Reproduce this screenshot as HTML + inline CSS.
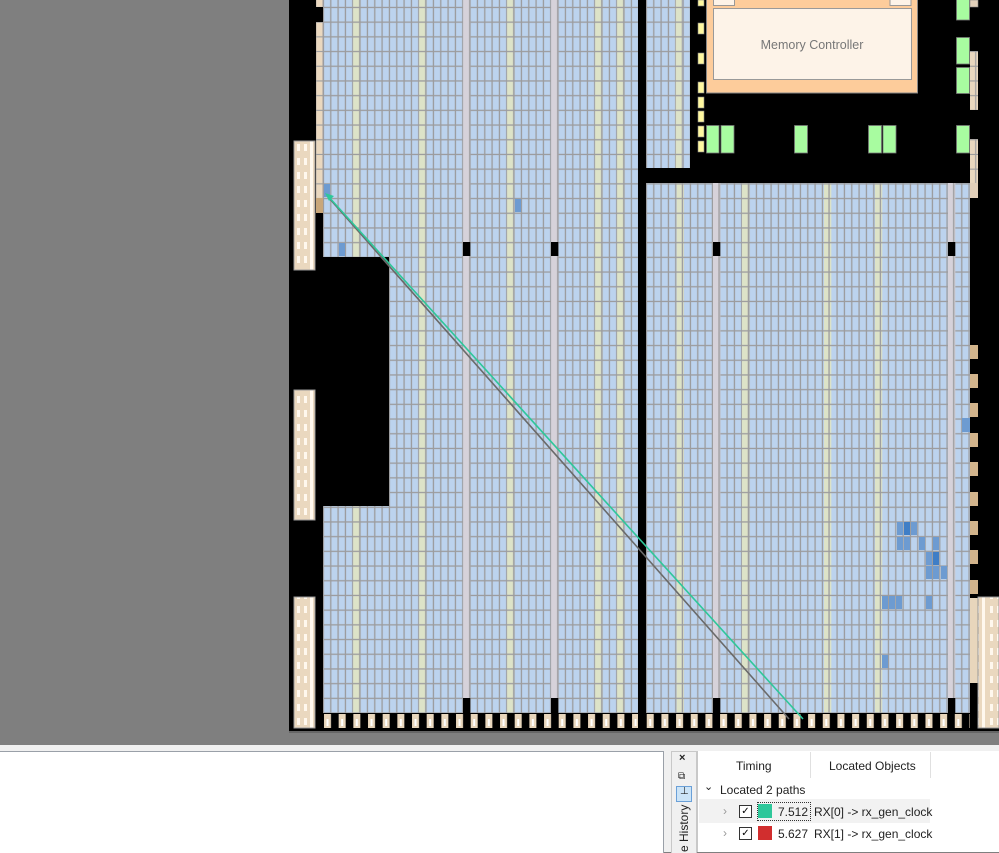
<!DOCTYPE html>
<html><head><meta charset="utf-8"><style>
html,body{margin:0;padding:0;width:999px;height:852px;overflow:hidden;background:#7f7f7f;font-family:"Liberation Sans",sans-serif}
svg{position:absolute;left:0;top:0}
.t{position:absolute;font-size:12px;color:#222;white-space:nowrap}
</style></head><body>
<svg width="999" height="745" viewBox="0 0 999 745">
<defs>
<pattern id="pl" patternUnits="userSpaceOnUse" x="323" y="7" width="7.333" height="14.7">
<rect width="7.4" height="14.8" fill="#9c9c9e"/><rect x="1.1" y="1.1" width="6" height="13.4" fill="#bcd3ee"/></pattern>
<pattern id="pr" patternUnits="userSpaceOnUse" x="646" y="7" width="7.333" height="14.7">
<rect width="7.4" height="14.8" fill="#9c9c9e"/><rect x="1.1" y="1.1" width="6" height="13.4" fill="#bcd3ee"/></pattern>
<pattern id="py" patternUnits="userSpaceOnUse" x="0" y="7" width="7.333" height="14.7">
<rect width="7.4" height="14.8" fill="#9c9c9e"/><rect x="1.1" y="1.1" width="6" height="13.4" fill="#dde3c8"/></pattern>
<pattern id="pg" patternUnits="userSpaceOnUse" x="0" y="7" width="7.333" height="14.7">
<rect width="7.4" height="14.8" fill="#9c9c9e"/><rect x="1.1" y="0" width="6" height="14.8" fill="#d6d2da"/></pattern>
<pattern id="pt" patternUnits="userSpaceOnUse" x="0" y="7" width="7.333" height="14.7">
<rect width="7.4" height="14.8" fill="#9c9c9e"/><rect x="1" y="1" width="6.2" height="13.6" fill="#ead8bf"/></pattern>
<pattern id="pio" patternUnits="userSpaceOnUse" x="323" y="713" width="14.67" height="16">
<rect width="14.67" height="16" fill="#000"/><rect x="1" y="1" width="7" height="14" fill="#e8d6bc"/><rect x="3.5" y="6" width="2" height="7" fill="#fff"/></pattern>
<pattern id="ptb" patternUnits="userSpaceOnUse" x="294" y="141" width="21" height="14">
<rect width="21" height="14" fill="#ead8bf"/><rect x="3" y="3" width="3" height="7" fill="#fff8ee"/><rect x="10" y="3" width="3" height="7" fill="#fff8ee"/><rect x="16" y="0" width="3" height="14" fill="#fff8ee"/></pattern>
</defs>
<rect x="289" y="0" width="710" height="731" fill="#000"/>
<rect x="289" y="731" width="710" height="2" fill="#666"/>
<rect x="323" y="0" width="315" height="713" fill="url(#pl)"/>
<rect x="316" y="0" width="7" height="213" fill="url(#pt)"/>
<rect x="316" y="198" width="7" height="15" fill="#c9a77a"/>
<rect x="316" y="7" width="7" height="15" fill="#000"/>
<g fill="url(#py)"><rect x="353" y="0" width="7.3" height="713"/><rect x="419" y="0" width="7.3" height="713"/><rect x="507" y="0" width="7.3" height="713"/><rect x="595" y="0" width="7.3" height="713"/><rect x="617" y="0" width="7.3" height="713"/></g>
<g fill="url(#pg)"><rect x="463" y="0" width="7.3" height="713"/><rect x="551" y="0" width="7.3" height="713"/></g>
<rect x="316" y="257" width="73" height="249" fill="#000"/>
<rect x="640" y="0" width="6" height="731" fill="#000"/>
<rect x="646" y="0" width="44" height="168" fill="url(#pr)"/>
<rect x="675" y="0" width="7.3" height="168" fill="url(#py)"/>
<g fill="#fff8a0" stroke="#888" stroke-width="0.6"><rect x="698" y="0" width="6" height="6"/><rect x="698" y="23" width="6" height="11"/><rect x="698" y="53" width="6" height="11"/><rect x="698" y="82" width="6" height="11"/><rect x="698" y="97" width="6" height="11"/><rect x="698" y="111" width="6" height="11"/><rect x="698" y="126" width="6" height="11"/><rect x="698" y="141" width="6" height="11"/></g>
<rect x="706.5" y="-1" width="211" height="94" fill="#fdcc9b" stroke="#888"/>
<rect x="713.5" y="8.5" width="198" height="71" fill="#fdf3e8" stroke="#999"/>
<rect x="713.5" y="-1" width="21" height="6.5" fill="#fdf3e8" stroke="#999"/>
<rect x="890" y="-1" width="21" height="6.5" fill="#fdf3e8" stroke="#999"/>
<text x="812" y="49" text-anchor="middle" font-family="Liberation Sans" font-size="12.5" fill="#777">Memory Controller</text>
<g fill="#a8fca0" stroke="#777" stroke-width="0.8"><rect x="706.5" y="125.5" width="12.5" height="27.5"/><rect x="721" y="125.5" width="13" height="27.5"/><rect x="794.5" y="125.5" width="13" height="27.5"/><rect x="868.5" y="125.5" width="13" height="27.5"/><rect x="883" y="125.5" width="13" height="27.5"/><rect x="956.5" y="125.5" width="13" height="27.5"/><rect x="956.5" y="-1" width="13" height="21"/><rect x="956.5" y="37.5" width="13" height="26.5"/><rect x="956.5" y="67.5" width="13" height="26"/></g>
<rect x="970" y="0" width="8" height="7" fill="#e2d0ba" stroke="#888" stroke-width="0.6"/>
<rect x="970" y="51" width="8" height="59" fill="url(#pt)"/>
<rect x="970" y="139" width="8" height="44" fill="url(#pt)"/>
<rect x="646" y="183" width="324" height="530" fill="url(#pr)"/>
<g fill="url(#py)"><rect x="676.6" y="183" width="7.3" height="530"/><rect x="742" y="183" width="7.3" height="530"/><rect x="824" y="183" width="7.3" height="530"/><rect x="875" y="183" width="7.3" height="530"/></g>
<g fill="url(#pg)"><rect x="713" y="183" width="7.3" height="530"/><rect x="948" y="183" width="7.3" height="530"/></g>
<rect x="970" y="183" width="8" height="15" fill="#e2d0ba"/>
<g fill="#d2b48c"><rect x="970" y="345" width="8" height="14"/><rect x="970" y="374" width="8" height="14"/><rect x="970" y="403" width="8" height="14"/><rect x="970" y="433" width="8" height="14"/><rect x="970" y="462" width="8" height="14"/><rect x="970" y="492" width="8" height="14"/><rect x="970" y="521" width="8" height="14"/><rect x="970" y="550" width="8" height="14"/><rect x="970" y="580" width="8" height="14"/></g>
<rect x="970" y="598" width="8" height="85" fill="#e8d6bc"/>
<rect x="978" y="597" width="21" height="131" fill="url(#ptb)" stroke="#999"/>
<rect x="962" y="418" width="8" height="14" fill="#6d9bd1"/>
<rect x="294" y="141" width="21" height="129" fill="url(#ptb)" stroke="#999"/>
<rect x="294" y="390" width="21" height="130" fill="url(#ptb)" stroke="#999"/>
<rect x="294" y="597" width="21" height="131" fill="url(#ptb)" stroke="#999"/>
<g fill="#000"><rect x="463" y="242" width="7.3" height="14"/><rect x="551" y="242" width="7.3" height="14"/><rect x="713" y="242" width="7.3" height="14"/><rect x="948" y="242" width="7.3" height="14"/><rect x="463" y="698" width="7.3" height="15"/><rect x="551" y="698" width="7.3" height="15"/><rect x="713" y="698" width="7.3" height="15"/><rect x="948" y="698" width="7.3" height="15"/></g>
<rect x="323" y="713" width="315" height="15" fill="url(#pio)"/>
<rect x="646" y="713" width="324" height="15" fill="url(#pio)"/>
<g fill="#6d9bd1"><rect x="324" y="184" width="6" height="13"/><rect x="515" y="199" width="6" height="13"/><rect x="339" y="243" width="6" height="13"/>
<rect x="897" y="522" width="6" height="13"/><rect x="904" y="522" width="6" height="13" fill="#3f7ec6"/><rect x="911" y="522" width="6" height="13"/>
<rect x="897" y="537" width="6" height="13"/><rect x="904" y="537" width="6" height="13"/><rect x="919" y="537" width="6" height="13"/><rect x="933" y="537" width="6" height="13"/>
<rect x="926" y="552" width="6" height="13"/><rect x="933" y="552" width="6" height="13" fill="#3f7ec6"/>
<rect x="926" y="566" width="6" height="13"/><rect x="933" y="566" width="6" height="13"/><rect x="941" y="566" width="6" height="13"/>
<rect x="882" y="596" width="6" height="13"/><rect x="889" y="596" width="6" height="13"/><rect x="896" y="596" width="6" height="13"/><rect x="926" y="596" width="6" height="13"/>
<rect x="882" y="655" width="6" height="13"/></g>
<line x1="329" y1="198" x2="789" y2="719" stroke="#6a6a6a" stroke-width="1.6"/>
<line x1="327" y1="195" x2="803" y2="719" stroke="#2ec79a" stroke-width="1.6"/>
<path d="M325 193 L334 196 L329 201 Z" fill="#2ec79a"/>
</svg>
<div style="position:absolute;left:0;top:745px;width:999px;height:107px;background:#f0f0f0"></div>
<div style="position:absolute;left:0;top:751px;width:663px;height:101px;background:#fff;border-top:1px solid #9aa0a8;border-right:1px solid #9aa0a8"></div>
<div style="position:absolute;left:671px;top:751px;width:24px;height:101px;background:#f0f0f0;border:1px solid #c8c8c8;border-bottom:none"></div>
<div class="t" style="left:679px;top:752px;font-size:11px;font-weight:bold">×</div>
<div class="t" style="left:678px;top:771px;font-size:10px">⧉</div>
<div style="position:absolute;left:676px;top:786px;width:14px;height:14px;background:#cce4f7;border:1px solid #6aa0d8"></div>
<div class="t" style="left:680px;top:786px;font-size:10px">⊥</div>
<div class="t" style="transform:rotate(-90deg);transform-origin:left top;left:677px;top:852px;font-size:12px">e History</div>
<div style="position:absolute;left:697px;top:751px;width:302px;height:101px;background:#fff;border-left:1px solid #c8c8c8"></div>
<div style="position:absolute;left:810px;top:752px;width:1px;height:26px;background:#e0e0e0"></div>
<div style="position:absolute;left:930px;top:752px;width:1px;height:26px;background:#e0e0e0"></div>
<div class="t" style="left:736px;top:759px">Timing</div>
<div class="t" style="left:829px;top:759px">Located Objects</div>
<div class="t" style="left:704px;top:780px;font-size:11px">⌄</div>
<div class="t" style="left:720px;top:783px">Located 2 paths</div>
<div style="position:absolute;left:699px;top:799px;width:231px;height:24px;background:#f2f2f2"></div>
<div class="t" style="left:723px;top:804px;color:#999">›</div>
<div class="t" style="left:723px;top:826px;color:#999">›</div>
<div style="position:absolute;left:739px;top:805px;width:11px;height:11px;border:1px solid #333;background:#fff;font-size:10px;line-height:11px;text-align:center">✓</div>
<div style="position:absolute;left:739px;top:827px;width:11px;height:11px;border:1px solid #333;background:#fff;font-size:10px;line-height:11px;text-align:center">✓</div>
<div style="position:absolute;left:757px;top:802px;width:52px;height:17px;border:1px dotted #333"></div>
<div style="position:absolute;left:758px;top:804px;width:14px;height:14px;background:#2ec79a"></div>
<div style="position:absolute;left:758px;top:826px;width:14px;height:14px;background:#d12e2e"></div>
<div class="t" style="left:778px;top:805px">7.512</div>
<div class="t" style="left:814px;top:805px">RX[0] -&gt; rx_gen_clock</div>
<div class="t" style="left:778px;top:827px">5.627</div>
<div class="t" style="left:814px;top:827px">RX[1] -&gt; rx_gen_clock</div>
</body></html>
